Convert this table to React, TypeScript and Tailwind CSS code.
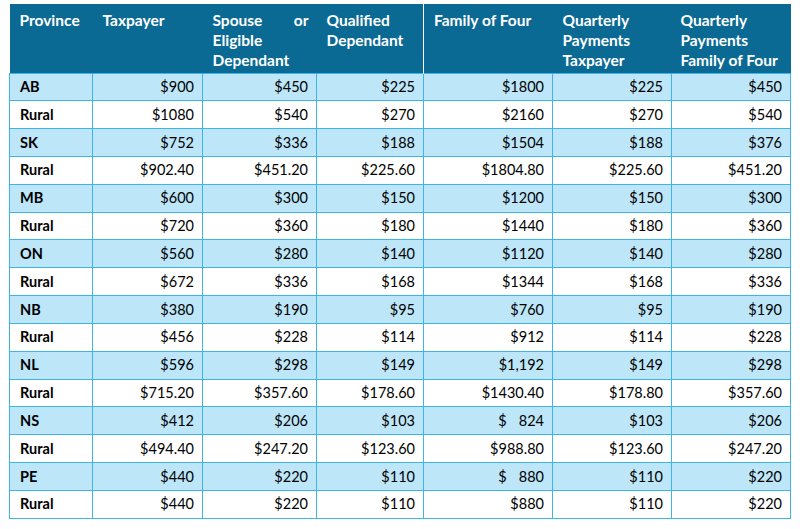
import React from "react";

const rows: string[][] = [
  ["AB", "$900", "$450", "$225", "$1800", "$225", "$450"],
  ["Rural", "$1080", "$540", "$270", "$2160", "$270", "$540"],
  ["SK", "$752", "$336", "$188", "$1504", "$188", "$376"],
  ["Rural", "$902.40", "$451.20", "$225.60", "$1804.80", "$225.60", "$451.20"],
  ["MB", "$600", "$300", "$150", "$1200", "$150", "$300"],
  ["Rural", "$720", "$360", "$180", "$1440", "$180", "$360"],
  ["ON", "$560", "$280", "$140", "$1120", "$140", "$280"],
  ["Rural", "$672", "$336", "$168", "$1344", "$168", "$336"],
  ["NB", "$380", "$190", "$95", "$760", "$95", "$190"],
  ["Rural", "$456", "$228", "$114", "$912", "$114", "$228"],
  ["NL", "$596", "$298", "$149", "$1,192", "$149", "$298"],
  ["Rural", "$715.20", "$357.60", "$178.60", "$1430.40", "$178.80", "$357.60"],
  ["NS", "$412", "$206", "$103", "$|824", "$103", "$206"],
  ["Rural", "$494.40", "$247.20", "$123.60", "$988.80", "$123.60", "$247.20"],
  ["PE", "$440", "$220", "$110", "$|880", "$110", "$220"],
  ["Rural", "$440", "$220", "$110", "$880", "$110", "$220"],
];

const widths = [83, 110, 114, 107, 129, 119, 119];

function Cell({ v }: { v: string }) {
  if (v.includes("|")) {
    const [a, b] = v.split("|");
    return (
      <>
        {a}
        <span className="ml-[12px]">{b}</span>
      </>
    );
  }
  return <>{v}</>;
}

export default function App() {
  return (
    <div
      className="w-[800px] h-[529px] bg-white pt-[4px] pl-[9px]"
      style={{ fontFamily: "Lato, 'Open Sans', sans-serif" }}
    >
      <table className="border-collapse table-fixed w-[781px] text-[14.5px] text-black">
        <colgroup>
          {widths.map((w, i) => (
            <col key={i} style={{ width: w }} />
          ))}
        </colgroup>
        <thead>
          <tr className="bg-[#0b6a93] text-white leading-[20px] h-[69px] text-[15.5px]">
            <th className="align-top text-left pl-[10px] pr-[8px] pt-[6px] font-bold">Province</th>
            <th className="align-top text-left pl-[10px] pr-[8px] pt-[6px] font-bold">Taxpayer</th>
            <th className="align-top text-left pl-[10px] pr-[8px] pt-[6px] font-bold">
              <div className="flex justify-between">
                <span>Spouse</span>
                <span>or</span>
              </div>
              <div>Eligible</div>
              <div>Dependant</div>
            </th>
            <th className="align-top text-left pl-[10px] pr-[8px] pt-[6px] font-bold border-r border-r-white">
              <div>Qualified</div>
              <div>Dependant</div>
            </th>
            <th className="align-top text-left pl-[10px] pr-[8px] pt-[6px] font-bold">Family of Four</th>
            <th className="align-top text-left pl-[10px] pr-[8px] pt-[6px] font-bold">
              <div>Quarterly</div>
              <div>Payments</div>
              <div>Taxpayer</div>
            </th>
            <th className="align-top text-left pl-[9px] pr-[6px] pt-[6px] font-bold">
              <div>Quarterly</div>
              <div>Payments</div>
              <div className="whitespace-nowrap">Family of Four</div>
            </th>
          </tr>
        </thead>
        <tbody>
          {rows.map((r, ri) => (
            <tr key={ri} className={ri % 2 === 0 ? "bg-[#bde6f9] h-[27.83px]" : "bg-white h-[27.83px]"}>
              {r.map((c, ci) => (
                <td
                  key={ci}
                  className={
                    ci === 0
                      ? "border border-[#3db5ea] pl-[10px] pr-[8px] py-0 text-left font-bold leading-[20px]"
                      : "border border-[#3db5ea] pl-[8px] pr-[8px] py-0 text-right whitespace-nowrap leading-[20px]"
                  }
                >
                  <Cell v={c} />
                </td>
              ))}
            </tr>
          ))}
        </tbody>
      </table>
    </div>
  );
}
